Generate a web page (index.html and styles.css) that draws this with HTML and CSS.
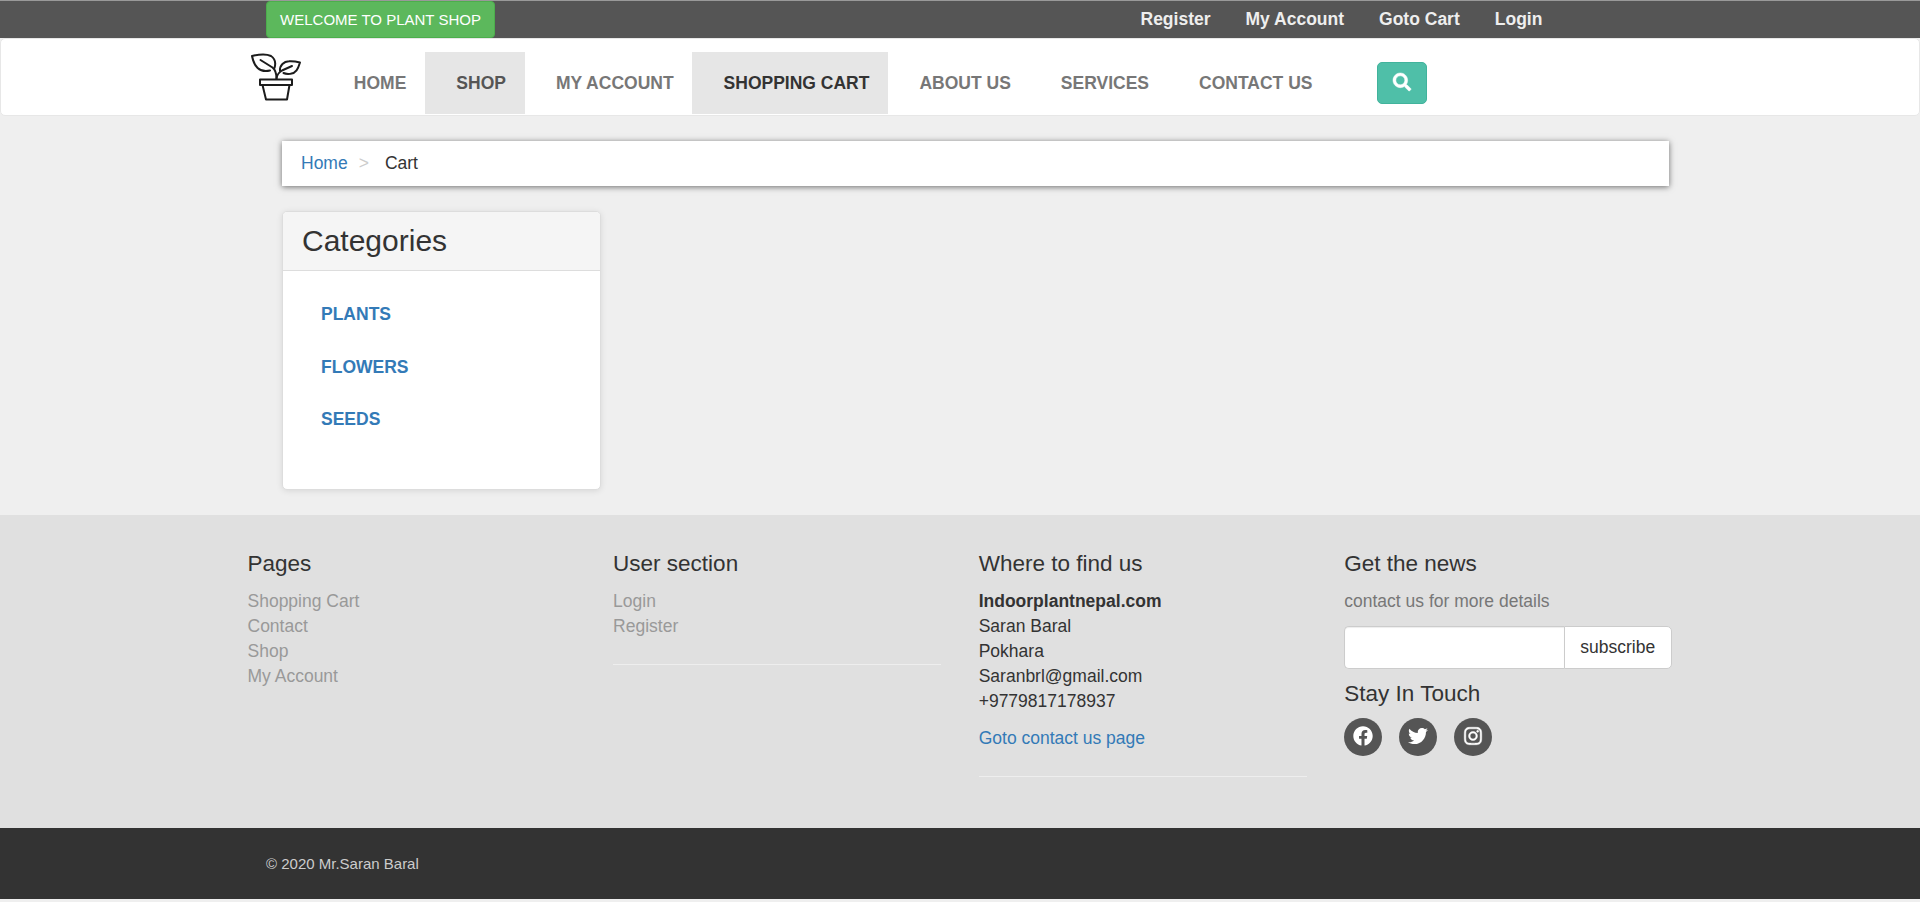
FILE: index.html
```html
<!DOCTYPE html>
<html lang="en">
<head>
<meta charset="utf-8">
<title>Plant Shop - Cart</title>
<link rel="stylesheet" href="styles.css">
</head>
<body>
<div class="topbar">
  <a class="welcome" href="#">WELCOME TO PLANT SHOP</a>
  <ul class="topmenu">
    <li><a href="#">Register</a></li>
    <li><a href="#">My Account</a></li>
    <li><a href="#">Goto Cart</a></li>
    <li><a href="#">Login</a></li>
  </ul>
</div>
<nav class="navbar">
  <a class="brand" href="#">
    <svg viewBox="0 0 60 60" width="60" height="60" fill="none" stroke="#1c1c1c" stroke-width="2" stroke-linejoin="round" stroke-linecap="round">
      <path d="M24 22.500C13 25 8 18 6 8C12 6.500 20 5.500 25 8C29.500 11 30 15 28.500 20"/>
      <path d="M14.500 12L26.500 19.500C29 21.500 30.500 24 30.500 30.500"/>
      <path d="M34 23C33.500 17 38 13.500 43 13.300C47 13 50 13.500 54 14.500C52 21 50 25 44.500 25.800C41 26.200 39 25.800 37.500 25"/>
      <path d="M46 18L36 22.500C32.500 24.500 31 26.500 30.500 30.500"/>
      <path d="M14 31.500H46V37H14ZM16.500 37L20 51.500H41L43.500 37"/>
    </svg>
  </a>
  <ul class="menu">
    <li><a href="#">HOME</a></li>
    <li><a class="hover" href="#">SHOP</a></li>
    <li><a href="#">MY ACCOUNT</a></li>
    <li><a class="active" href="#">SHOPPING CART</a></li>
    <li><a href="#">ABOUT US</a></li>
    <li><a href="#">SERVICES</a></li>
    <li><a href="#">CONTACT US</a></li>
  </ul>
  <button class="search" aria-label="Search">
    <svg viewBox="0 0 512 512" width="18" height="18" fill="#fff" stroke="#fff" stroke-width="14"><path d="M505 442.700L405.300 343c-4.500-4.500-10.600-7-17-7H372c27.600-35.300 44-79.700 44-128C416 93.100 322.900 0 208 0S0 93.100 0 208s93.100 208 208 208c48.300 0 92.700-16.400 128-44v16.300c0 6.400 2.500 12.500 7 17l99.700 99.700c9.400 9.400 24.600 9.400 33.900 0l28.300-28.300c9.400-9.400 9.400-24.600.1-34zM208 336c-70.700 0-128-57.200-128-128 0-70.700 57.200-128 128-128 70.700 0 128 57.200 128 128 0 70.700-57.200 128-128 128z"/></svg>
  </button>
</nav>
<main class="content">
  <div class="breadcrumb"><a href="#">Home</a><span class="sep">&gt;</span><span>Cart</span></div>
  <aside class="panel">
    <h3>Categories</h3>
    <ul>
      <li><a href="#">PLANTS</a></li>
      <li><a href="#">FLOWERS</a></li>
      <li><a href="#">SEEDS</a></li>
    </ul>
  </aside>
</main>
<footer class="footer">
  <section>
    <h4>Pages</h4>
    <ul class="links">
      <li><a href="#">Shopping Cart</a></li>
      <li><a href="#">Contact</a></li>
      <li><a href="#">Shop</a></li>
      <li><a href="#">My Account</a></li>
    </ul>
  </section>
  <section>
    <h4>User section</h4>
    <ul class="links">
      <li><a href="#">Login</a></li>
      <li><a href="#">Register</a></li>
    </ul>
    <hr>
  </section>
  <section>
    <h4>Where to find us</h4>
    <p class="address"><strong>Indoorplantnepal.com</strong><br>Saran Baral<br>Pokhara<br>Saranbrl@gmail.com<br>+9779817178937</p>
    <a class="contact" href="#">Goto contact us page</a>
    <hr>
  </section>
  <section>
    <h4>Get the news</h4>
    <p class="muted">contact us for more details</p>
    <form class="subscribe">
      <input type="text" aria-label="Email">
      <button type="button">subscribe</button>
    </form>
    <h4 class="touch">Stay In Touch</h4>
    <div class="social">
      <a href="#" aria-label="Facebook"><svg viewBox="0 0 512 512" width="20" height="20"><path d="M504 256C504 119 393 8 256 8S8 119 8 256c0 123.780 90.690 226.380 209.250 245V327.690h-63V256h63v-54.640c0-62.150 37-96.480 93.670-96.480 27.140 0 55.520 4.840 55.520 4.840v61h-31.280c-30.800 0-40.410 19.120-40.410 38.730V256h68.780l-11 71.690h-57.780V501C413.310 482.380 504 379.780 504 256z"/></svg></a>
      <a href="#" aria-label="Twitter"><svg viewBox="0 0 512 512" width="20" height="20"><path d="M459.370 151.716c.325 4.548.325 9.097.325 13.645 0 138.720-105.583 298.558-298.558 298.558-59.452 0-114.680-17.219-161.137-47.106 8.447.974 16.568 1.299 25.340 1.299 49.055 0 94.213-16.568 130.274-44.832-46.132-.975-84.792-31.188-98.112-72.772 6.498.974 12.995 1.624 19.818 1.624 9.421 0 18.843-1.300 27.614-3.573-48.081-9.747-84.143-51.980-84.143-102.985v-1.299c13.969 7.797 30.214 12.670 47.431 13.319-28.264-18.843-46.781-51.005-46.781-87.391 0-19.492 5.197-37.360 14.294-52.954 51.655 63.675 129.300 105.258 216.365 109.807-1.624-7.797-2.599-15.918-2.599-24.040 0-57.828 46.782-104.934 104.934-104.934 30.213 0 57.502 12.670 76.670 33.137 23.715-4.548 46.456-13.320 66.599-25.340-7.798 24.366-24.366 44.833-46.132 57.827 21.117-2.273 41.584-8.122 60.426-16.243-14.292 20.791-32.161 39.308-52.628 54.253z"/></svg></a>
      <a href="#" aria-label="Instagram"><svg class="bold" viewBox="0 0 448 512" width="18" height="20"><path d="M224.100 141c-63.600 0-114.900 51.300-114.900 114.900s51.300 114.900 114.900 114.900S339 319.500 339 255.900 287.700 141 224.100 141zm0 189.600c-41.100 0-74.700-33.500-74.700-74.700s33.500-74.700 74.700-74.700 74.700 33.500 74.700 74.700-33.600 74.700-74.700 74.700zm146.400-194.300c0 14.900-12 26.800-26.800 26.800-14.900 0-26.800-12-26.800-26.800s12-26.800 26.800-26.800 26.800 12 26.800 26.800zm76.100 27.200c-1.700-35.900-9.900-67.700-36.200-93.900-26.200-26.200-58-34.400-93.900-36.200-37-2.100-147.900-2.100-184.900 0-35.800 1.700-67.600 9.900-93.900 36.100s-34.400 58-36.200 93.900c-2.100 37-2.100 147.900 0 184.900 1.700 35.900 9.900 67.700 36.200 93.900s58 34.400 93.900 36.200c37 2.100 147.900 2.100 184.900 0 35.900-1.700 67.700-9.900 93.900-36.200 26.200-26.200 34.400-58 36.200-93.900 2.100-37 2.100-147.800 0-184.800zM398.800 388c-7.800 19.600-22.900 34.700-42.600 42.600-29.500 11.700-99.500 9-132.100 9s-102.700 2.600-132.100-9c-19.600-7.800-34.700-22.900-42.600-42.600-11.700-29.500-9-99.500-9-132.100s-2.600-102.700 9-132.100c7.800-19.600 22.900-34.700 42.600-42.600 29.500-11.700 99.500-9 132.100-9s102.700-2.600 132.100 9c19.600 7.800 34.700 22.900 42.600 42.600 11.700 29.500 9 99.500 9 132.100s2.700 102.700-9 132.100z"/></svg></a>
    </div>
  </section>
</footer>
<div class="copyright">© 2020 Mr.Saran Baral</div>
</body>
</html>
```
FILE: styles.css
```css
* { box-sizing: border-box; }
body {
  margin: 0;
  background: #efefef;
  color: #333;
  font: 17.5px/25px "Liberation Sans", Arial, sans-serif;
  overflow: hidden;
}
a { color: #337ab7; text-decoration: none; }
ul { list-style: none; margin: 0; padding: 0; }
h3, h4, p { margin: 0; font-weight: 400; }

.topbar {
  display: flex;
  height: 38px;
  padding-left: 266px;
  background: #555;
  border-top: 1px solid #999;
}
.welcome {
  width: 229px;
  height: 37px;
  border: 1px solid #4cae4c;
  border-radius: 4px;
  background: #5cb85c;
  color: #fff;
  font-size: 15px;
  line-height: 36px;
  text-align: center;
}
.topmenu { display: flex; gap: 35px; margin-left: 645.5px; }
.topmenu a { color: #eee; font-weight: 700; line-height: 37px; }
.topmenu li { line-height: 37px; }

.navbar {
  display: flex;
  height: 78px;
  padding-left: 245px;
  background: #fff;
  border: 1px solid #e7e7e7;
  border-radius: 5px;
}
.brand { width: 76.6px; padding-top: 9px; }
.brand svg { display: block; }
.menu { display: flex; padding-top: 13px; }
.menu a {
  display: block;
  height: 62px;
  padding: 0 18.75px 0 31.25px;
  color: #777;
  font-weight: 700;
  line-height: 63px;
}
.menu .hover { background: #e6e6e6; color: #555; }
.menu .active { background: #e6e6e6; color: #333; }
.search {
  display: flex;
  align-items: center;
  justify-content: center;
  width: 50px;
  height: 42px;
  margin: 23px 0 0 46px;
  padding: 0 0 2px;
  border: 1px solid #41b39c;
  border-radius: 5px;
  background: #4fbfa8;
}
.search svg { overflow: visible; }

.content { height: 399px; padding: 25px 251px 0 282px; }
.breadcrumb {
  height: 45px;
  padding-left: 19px;
  background: #fff;
  box-shadow: 0 1px 6px rgba(0, 0, 0, .55);
  line-height: 44px;
}
.sep { margin: 0 16px 0 11px; color: #ccc; }
.panel {
  width: 319px;
  height: 279px;
  margin-top: 25px;
  border: 1px solid #ddd;
  border-radius: 5px;
  background: #fff;
  box-shadow: 0 1px 6px rgba(0, 0, 0, .1);
}
.panel h3 {
  height: 59px;
  padding-left: 19px;
  border-bottom: 1px solid #ddd;
  border-radius: 4px 4px 0 0;
  background: #f5f5f5;
  font-size: 30px;
  line-height: 58px;
}
.panel ul { padding: 17px 0 0 38px; }
.panel li { height: 52.5px; line-height: 52px; font-weight: 700; }

.footer {
  display: grid;
  grid-template-columns: repeat(4, 328px);
  column-gap: 37.6px;
  height: 313px;
  padding: 35px 0 0 247.5px;
  background: #e0e0e0;
}
.footer h4 { font-size: 22.5px; line-height: 27px; margin-bottom: 12px; }
.links a { color: #999; }
.footer hr { height: 2px; margin: 25px 0 0; border: 0; border-top: 1px solid #eee; }
.contact { display: block; margin-top: 12px; }
.muted { color: #777; }
.subscribe { display: flex; height: 43px; margin: 12px 0 11px -.5px; }
.subscribe input {
  width: 220px;
  border: 1px solid #ccc;
  border-right: 0;
  border-radius: 5px 0 0 5px;
  background: #fff;
  box-shadow: inset 0 1px 1px rgba(0, 0, 0, .075);
}
.subscribe button {
  width: 108px;
  padding: 0;
  border: 1px solid #ccc;
  border-radius: 0 5px 5px 0;
  background: #fff;
  color: #333;
  font: inherit;
}
.footer .touch { margin-bottom: 11px; }
.social { display: flex; gap: 17px; }
.social a {
  display: flex;
  align-items: center;
  justify-content: center;
  width: 38px;
  height: 38px;
  padding-bottom: 2px;
  border-radius: 50%;
  background: #555;
}
.social svg { fill: #fff; }
.social .bold { stroke: #fff; stroke-width: 12; overflow: visible; }

.copyright {
  height: 71px;
  padding-left: 266px;
  background: #333;
  color: #ccc;
  font-size: 15px;
  line-height: 72px;
}
```
